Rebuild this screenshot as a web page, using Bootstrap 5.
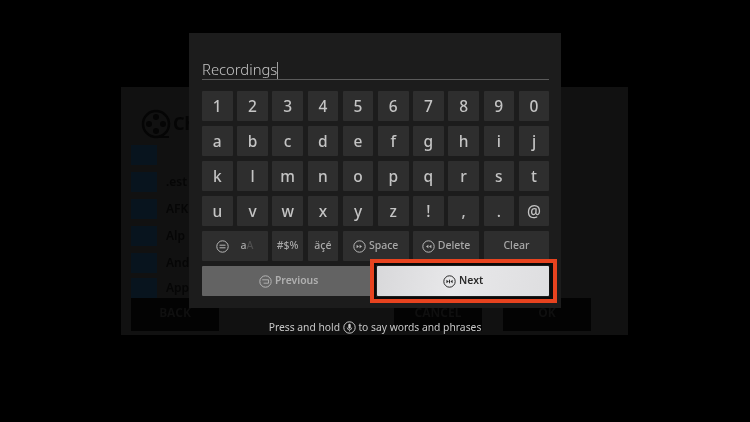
<!doctype html>
<html lang="en"><head><meta charset="utf-8">
<link href="https://cdn.jsdelivr.net/npm/bootstrap@5.3.0/dist/css/bootstrap.min.css" rel="stylesheet">
<style>
html,body{width:750px;height:422px;overflow:hidden;background:#000;margin:0;font-family:"Noto Sans",sans-serif}
.stage{width:750px;height:422px;padding:87px 122px 87px 121px;filter:blur(.4px)}
.under{height:248px;background:#111;padding:20px 37px 4px 10px;color:#050505}
.under-head{height:33px;margin-bottom:1px;padding-left:10px;gap:2px;flex:none}
.under-title{font-size:18px;font-weight:700;color:#050505}
.under-list{min-height:0;overflow:hidden}
.under-row{height:27.2px;font-size:12px;font-weight:600;line-height:14px;color:#060606;gap:9px;flex:none}
.under-row:last-child{height:22px}
.under-chip{width:26px;height:20px;background:#08141e;flex:none}
.under-btn{width:88px;height:33px;background:#030303;color:#0f0f0f;font-size:12px;font-weight:700;line-height:12px;padding-bottom:4px;flex:none}
.cancel-gap{margin-left:auto}
.ok-gap{margin-left:21px}
.kb{position:absolute;left:189px;top:33px;width:372px;height:275px;background:#1c1c1c;padding:26px 12px 0 13px;filter:blur(.35px)}
.entry{height:21px;border-bottom:1px solid #5a5a5a;color:#c4c4c4;font-size:14.8px;line-height:20px;font-weight:300;margin-bottom:11px;white-space:nowrap}
.caret-bar{display:inline-block;width:1px;height:17px;background:#a0a0a0;vertical-align:-4px}
.keys{display:grid;grid-template-columns:repeat(10,30.6px);grid-auto-rows:30.4px;column-gap:4.6px;row-gap:4.6px}
.ky{background:#2e2e2e;border-radius:1px;color:#c4c4c4;font-size:15.5px;font-weight:500;display:flex;align-items:center;justify-content:center;gap:3px;white-space:nowrap}
.sm{font-size:10.5px;color:#a8a8a8}
.w2{grid-column:span 2}
.dim{color:#505050}
.prev{grid-column:span 5;background:#636363;color:#b0b0b0;font-size:10.4px;font-weight:600;margin-right:-2px}
.nxt{grid-column:span 5;margin-left:-1px;background:linear-gradient(100deg,#d8d8da,#e8e8ea 45%,#dedee0);color:#2a2a2a;font-size:10.4px;font-weight:600;position:relative}
.nxt::before{content:"";position:absolute;inset:-7px -8px -7px -6.5px;border:4.6px solid #e7431f;box-shadow:inset 0 0 0 2px #0a0a0a,inset -3.5px 0 0 #0a0a0a;pointer-events:none}
.hint{position:absolute;left:0;width:750px;top:321px;text-align:center;color:#c9c9c9;font-size:10.3px;line-height:13px;filter:blur(.25px)}
.hint svg{vertical-align:-3px}
</style></head><body>
<div class="stage">
 <div class="under d-flex flex-column">
  <div class="under-head d-flex align-items-center">
   <svg width="30" height="30" viewBox="0 0 30 30"><circle cx="15" cy="15" r="13" fill="none" stroke="#050505" stroke-width="2.5"/><circle cx="15" cy="8" r="3" fill="#050505"/><circle cx="15" cy="22" r="3" fill="#050505"/><circle cx="8" cy="15" r="3" fill="#050505"/><circle cx="22" cy="15" r="3" fill="#050505"/><path d="M15 28h13" stroke="#050505" stroke-width="2"/></svg>
   <span class="under-title">Ch</span>
  </div>
  <div class="under-list flex-grow-1 d-flex flex-column">
   <div class="under-row d-flex align-items-center"><span class="under-chip"></span></div>
   <div class="under-row d-flex align-items-center"><span class="under-chip"></span><span>.est</span></div>
   <div class="under-row d-flex align-items-center"><span class="under-chip"></span><span>AFK</span></div>
   <div class="under-row d-flex align-items-center"><span class="under-chip"></span><span>Alp</span></div>
   <div class="under-row d-flex align-items-center"><span class="under-chip"></span><span>And</span></div>
   <div class="under-row d-flex align-items-center"><span class="under-chip"></span><span>App</span></div>
  </div>
  <div class="d-flex">
   <div class="under-btn d-flex align-items-center justify-content-center">BACK</div>
   <div class="under-btn cancel-gap d-flex align-items-center justify-content-center">CANCEL</div>
   <div class="under-btn ok-gap d-flex align-items-center justify-content-center">OK</div>
  </div>
 </div>
</div>
<div class="kb">
 <div class="entry">Recordings<span class="caret-bar"></span></div>
 <div class="keys">
  <div class="ky">1</div><div class="ky">2</div><div class="ky">3</div><div class="ky">4</div><div class="ky">5</div><div class="ky">6</div><div class="ky">7</div><div class="ky">8</div><div class="ky">9</div><div class="ky">0</div>
  <div class="ky">a</div><div class="ky">b</div><div class="ky">c</div><div class="ky">d</div><div class="ky">e</div><div class="ky">f</div><div class="ky">g</div><div class="ky">h</div><div class="ky">i</div><div class="ky">j</div>
  <div class="ky">k</div><div class="ky">l</div><div class="ky">m</div><div class="ky">n</div><div class="ky">o</div><div class="ky">p</div><div class="ky">q</div><div class="ky">r</div><div class="ky">s</div><div class="ky">t</div>
  <div class="ky">u</div><div class="ky">v</div><div class="ky">w</div><div class="ky">x</div><div class="ky">y</div><div class="ky">z</div><div class="ky">!</div><div class="ky">,</div><div class="ky">.</div><div class="ky">@</div>
  <div class="ky sm w2"><svg width="13" height="13" viewBox="0 0 13 13" class="me-2"><circle cx="6.5" cy="6.5" r="5.7" fill="none" stroke="#b8b8b8"/><path d="M3.5 5.2h6M3.5 7.8h6" stroke="#b8b8b8"/></svg><span>a<span class="dim">A</span></span></div>
  <div class="ky sm">#$%</div><div class="ky sm">äçé</div>
  <div class="ky sm w2"><svg width="13" height="13" viewBox="0 0 13 13"><circle cx="6.5" cy="6.5" r="5.7" fill="none" stroke="#b8b8b8"/><path d="M3.6 4.8l2.4 1.7-2.4 1.7zM6.6 4.8l2.4 1.7-2.4 1.7z" fill="#b8b8b8"/></svg><span>Space</span></div>
  <div class="ky sm w2"><svg width="13" height="13" viewBox="0 0 13 13"><circle cx="6.5" cy="6.5" r="5.7" fill="none" stroke="#b8b8b8"/><path d="M6.4 4.8L4 6.5l2.4 1.7zM9.4 4.8L7 6.5l2.4 1.7z" fill="#b8b8b8"/></svg><span>Delete</span></div>
  <div class="ky sm w2">Clear</div>
  <div class="ky prev"><svg width="13" height="13" viewBox="0 0 13 13"><circle cx="6.5" cy="6.5" r="5.7" fill="none" stroke="#b5b5b5"/><path d="M3.2 4.8h6.3v3.4H4.6" fill="none" stroke="#b5b5b5" stroke-width=".9"/></svg><span>Previous</span></div>
  <div class="ky nxt"><svg width="13" height="13" viewBox="0 0 13 13"><circle cx="6.5" cy="6.5" r="5.7" fill="none" stroke="#2a2a2a"/><path d="M3.4 4.8l2.4 1.7-2.4 1.7zM6 4.8h1v3.4H6zM9.6 4.8L7.4 6.5l2.2 1.7z" fill="#2a2a2a"/></svg><span>Next</span></div>
 </div>
</div>
<div class="hint">Press and hold <svg width="13" height="13" viewBox="0 0 13 13"><circle cx="6.5" cy="6.5" r="5.7" fill="none" stroke="#c9c9c9"/><rect x="5.3" y="2.8" width="2.4" height="5" rx="1.2" fill="#c9c9c9"/><path d="M4.2 6.6a2.3 2.3 0 0 0 4.6 0M6.5 9v1.4" fill="none" stroke="#c9c9c9" stroke-width=".8"/></svg> to say words and phrases</div>
<script src="https://cdn.jsdelivr.net/npm/bootstrap@5.3.0/dist/js/bootstrap.bundle.min.js"></script>
</body></html>
